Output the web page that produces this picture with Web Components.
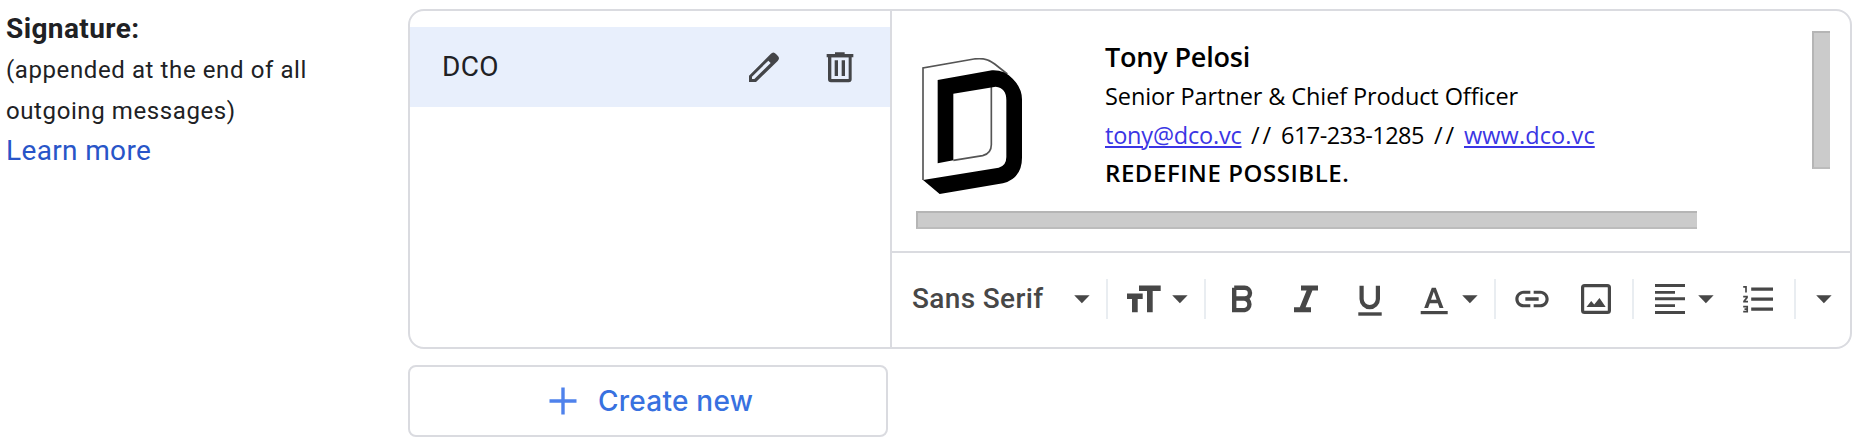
<!DOCTYPE html>
<html lang="en">
<head>
<meta charset="utf-8">
<title>Signature settings</title>
<style>
	body {
		margin: 0;
		background: #ffffff;
		color: #202124;
		font-family: Roboto, "Liberation Sans", sans-serif;
	}
</style>
</head>
<body>
<signature-settings></signature-settings>

<script>
const ICONS = {
	pencil: `<svg width="32" height="32" viewBox="1044 152 96 96">
		<path fill-rule="evenodd" d="M1047 245v-19l65-65q8-9 16 0l5 5q8 8 0 16l-65 63zM1056 236h7l49-48-7-7-49 48z"/></svg>`,
	trash: `<svg width="32" height="32" viewBox="1272 152 96 96">
		<path d="M1280 161h25v-5h29v5h26v10h-80z"/>
		<path fill-rule="evenodd" d="M1284 170h71v67q0 9-9 9h-53q-9 0-9-9zM1294 171v65h52v-65zM1304 180h10v47h-10zM1325 180h10v47h-10z"/></svg>`,
	size: `<svg width="40" height="40"><path d="M15 6.5h21.7V12h-8v21.3H23V12h-8zM3 14.5h15.7V20h-5v13.3H8V20H3z"/></svg>`,
	bold: `<svg width="40" height="40" fill="none" stroke="currentColor" stroke-width="4.4">
		<path d="M12.2 8.7H22.6a5.4 5.4 0 0 1 0 10.8H12.2M22.6 19.5a5.9 5.9 0 0 1 0 11.6H12.2V8.7"/></svg>`,
	italic: `<svg width="40" height="40"><path d="M15 6.5h17v5h-5.6L19.6 28.3H25v5H8v-5h5.8l6.8-16.8H15z"/></svg>`,
	underline: `<svg width="40" height="40"><path fill="none" stroke="currentColor" stroke-width="4.2" d="M11.6 6.7V20a8.15 8.15 0 0 0 16.3 0V6.7"/><path d="M8.3 33.3h23.4v3.4H8.3z"/></svg>`,
	color: `<svg width="40" height="40"><path fill-rule="evenodd" d="M17.8 8.7h4L29.5 29h-4l-1.7-4.7h-8L14.1 29h-3.9zM17 20.8h5.6l-2.8-8z"/><path d="M6.7 32h27v3.2h-27z"/></svg>`,
	link: `<svg width="40" height="40" viewBox="0 0 24 24"><path d="M3.9 12c0-1.71 1.39-3.1 3.1-3.1h4V7H7c-2.76 0-5 2.24-5 5s2.24 5 5 5h4v-1.9H7c-1.71 0-3.1-1.39-3.1-3.1zM8 13h8v-2H8v2zm9-6h-4v1.9h4c1.71 0 3.1 1.39 3.1 3.1s-1.39 3.1-3.1 3.1h-4V17h4c2.76 0 5-2.24 5-5s-2.24-5-5-5z"/></svg>`,
	image: `<svg width="40" height="40"><rect x="6.6" y="6.6" width="26.8" height="26.8" rx="2" fill="none" stroke="currentColor" stroke-width="3.2"/><path d="M10.5 28l4.7-6 3 3.5 5.3-6.5 6.2 9z"/></svg>`,
	align: `<svg width="40" height="40"><path d="M5 5h30v3H5zM5 12h20v2.7H5zM5 18.3h30v3H5zM5 25.3h20V28H5zM5 32h30v3H5z"/></svg>`,
	list: `<svg width="40" height="40">
		<path d="M13.2 8.4h21.8v3.3H13.2zM13.2 18.4h21.8v3.3H13.2zM13.2 28.4h21.8v3.3H13.2z"/>
		<g fill="none" stroke="currentColor" stroke-width="1.7"><path d="M5.2 7.8h2.8v5.7M5.2 17.7h3.8v.9L6 22.2v.4h4M5.2 27.6h4v5h-4M6.5 30.1H9"/></g></svg>`,
	arrow: `<svg width="16" height="40"><path d="M.2 16.3h15.4L7.9 24.3z"/></svg>`,
	plus: `<svg width="28" height="28"><path d="M12.3.5h3.4v11.8h11.8v3.4H15.7v11.8h-3.4V15.7H.5v-3.4h11.8z"/></svg>`
};

class UiIcon extends HTMLElement {
	connectedCallback() {
		this.attachShadow({ mode: "open" }).innerHTML = `
			<style>
				:host { display: block; flex: none; }
				svg { display: block; }
				svg:not([fill]) { fill: currentColor; }
			</style>
			${ICONS[this.getAttribute("name")]}
		`;
	}
}

class SettingLabel extends HTMLElement {
	connectedCallback() {
		this.attachShadow({ mode: "open" }).innerHTML = `
			<style>
				:host { display: block; padding: 8px 0 0 6px; line-height: 41px; white-space: nowrap; }
				.title { font-size: 28px; font-weight: 700; letter-spacing: 0.4px; }
				.note { font-size: 24px; letter-spacing: 0.6px; padding-top: 1px; }
				.more { display: block; font-size: 28px; line-height: 37px; letter-spacing: 0.35px; color: #2855c8; text-decoration: none; }
			</style>
			<div class="title">Signature:</div>
			<div class="note">(appended at the end of all<br>outgoing messages)</div>
			<a class="more" href="#">Learn more</a>
		`;
	}
}

class SignatureItem extends HTMLElement {
	connectedCallback() {
		this.attachShadow({ mode: "open" }).innerHTML = `
			<style>
				:host {
					display: flex;
					align-items: center;
					gap: 44px;
					box-sizing: border-box;
					height: 80px;
					margin-top: 16px;
					padding: 0 34px 0 32px;
					background: #e8effc;
				}
				.name { flex: 1; font-size: 28px; letter-spacing: 0.3px; margin-bottom: 2px; }
				ui-icon { color: #444548; }
			</style>
			<span class="name"><slot></slot></span>
			<ui-icon name="pencil"></ui-icon>
			<ui-icon name="trash"></ui-icon>
		`;
	}
}

class DcoLogo extends HTMLElement {
	connectedCallback() {
		this.attachShadow({ mode: "open" }).innerHTML = `
			<style>
				:host { display: block; }
				svg { display: block; }
			</style>
			<svg width="100" height="136" viewBox="66 54 300 408" fill="none">
				<path stroke="#555" stroke-width="5" d="M69 420V84L222 57Q258 51 284 72L322 102M160 361L248 347Q274 340 274 314V140"/>
				<path fill="#000" fill-rule="evenodd" d="M113 120L276 91Q312 89 338 116Q366 144 366 178V353Q366 414 309 430L119 462L69 420L296 383Q319 377 319 351V180Q319 144 287 140L160 161V361L113 370Z"/>
			</svg>
		`;
	}
}

class SignatureText extends HTMLElement {
	connectedCallback() {
		this.attachShadow({ mode: "open" }).innerHTML = `
			<style>
				:host { display: block; font: 23.5px "Open Sans", "Noto Sans", sans-serif; color: #000000; white-space: nowrap; }
				.name { font-size: 27px; font-weight: 600; line-height: 37px; letter-spacing: -0.19px; }
				.role { line-height: 42px; letter-spacing: -0.1px; }
				.contact { display: grid; grid-template-columns: 146px 30px 153px 30px auto; line-height: 36px; }
				.contact > * { justify-self: start; }
				.slashes { letter-spacing: 3px; }
				.phone { letter-spacing: -0.55px; }
				.mail { letter-spacing: -0.2px; }
				.site { letter-spacing: 0.1px; }
				.motto { font-size: 24px; font-weight: 600; line-height: 40px; letter-spacing: 0.55px; }
				a { color: #3b36e4; text-decoration: underline 2px; text-underline-offset: 2px; }
			</style>
			<div class="name">Tony Pelosi</div>
			<div class="role">Senior Partner &amp; Chief Product Officer</div>
			<div class="contact">
				<a class="mail" href="#">tony@dco.vc</a>
				<span class="slashes">//</span>
				<span class="phone">617-233-1285</span>
				<span class="slashes">//</span>
				<a class="site" href="#">www.dco.vc</a>
			</div>
			<div class="motto">REDEFINE POSSIBLE.</div>
		`;
	}
}

class SignatureEditor extends HTMLElement {
	connectedCallback() {
		this.attachShadow({ mode: "open" }).innerHTML = `
			<style>
				:host {
					display: grid;
					grid-template-columns: 189px 1fr 18px;
					grid-template-rows: 180px 18px;
					box-sizing: border-box;
					height: 240px;
					padding: 20px 20px 0 24px;
				}
				dco-logo { margin: 27px 0 0 6px; }
				signature-text { margin-top: 7px; }
				.bar { box-sizing: border-box; background: #cbcbcb; border: 2px solid #b5b5b5; border-right: 0; border-bottom-color: #bcbcbc; }
				.vertical { height: 138px; }
				.horizontal { grid-column: 1 / -1; width: 781px; }
			</style>
			<dco-logo></dco-logo>
			<signature-text></signature-text>
			<div class="bar vertical"></div>
			<div class="bar horizontal"></div>
		`;
	}
}

class FormatToolbar extends HTMLElement {
	connectedCallback() {
		this.attachShadow({ mode: "open" }).innerHTML = `
			<style>
				:host {
					display: flex;
					align-items: center;
					box-sizing: border-box;
					height: 94px;
					padding-left: 20px;
					border-top: 2px solid #dadbe0;
					color: #474747;
				}
				.font { width: 162px; font-size: 28px; font-weight: 500; letter-spacing: 0.35px; white-space: nowrap; margin-bottom: 2px; }
				.group { display: flex; gap: 24px; }
				.menu { display: flex; gap: 8px; }
				.rule { width: 2px; height: 40px; margin: 0 16px; background: #e9edf1; }
				.last { margin-left: 4px; }
			</style>
			<span class="font">Sans Serif</span>
			<ui-icon name="arrow"></ui-icon>
			<div class="rule"></div>
			<div class="menu"><ui-icon name="size"></ui-icon><ui-icon name="arrow"></ui-icon></div>
			<div class="rule"></div>
			<div class="group">
				<ui-icon name="bold"></ui-icon>
				<ui-icon name="italic"></ui-icon>
				<ui-icon name="underline"></ui-icon>
				<div class="menu"><ui-icon name="color"></ui-icon><ui-icon name="arrow"></ui-icon></div>
			</div>
			<div class="rule"></div>
			<div class="group">
				<ui-icon name="link"></ui-icon>
				<ui-icon name="image"></ui-icon>
			</div>
			<div class="rule"></div>
			<div class="group">
				<div class="menu"><ui-icon name="align"></ui-icon><ui-icon name="arrow"></ui-icon></div>
				<ui-icon name="list"></ui-icon>
			</div>
			<div class="rule"></div>
			<ui-icon class="last" name="arrow"></ui-icon>
		`;
	}
}

class CreateButton extends HTMLElement {
	connectedCallback() {
		this.attachShadow({ mode: "open" }).innerHTML = `
			<style>
				:host { display: block; width: 480px; }
				button {
					display: flex;
					align-items: center;
					width: 100%;
					height: 72px;
					padding: 0 0 0 139px;
					border: 2px solid #dadbe0;
					border-radius: 8px;
					background: #ffffff;
					color: #3871e0;
					font: 500 28px Inter, sans-serif;
					letter-spacing: 0.25px;
				}
				ui-icon { color: #4f82ec; margin-right: 21px; }
			</style>
			<button type="button"><ui-icon name="plus"></ui-icon><span><slot></slot></span></button>
		`;
	}
}

class SignatureSettings extends HTMLElement {
	connectedCallback() {
		this.attachShadow({ mode: "open" }).innerHTML = `
			<style>
				:host { display: grid; grid-template-columns: 408px 1444px; }
				main { padding-top: 9px; }
				.panel {
					display: grid;
					grid-template-columns: 480px 1fr;
					box-sizing: border-box;
					height: 340px;
					border: 2px solid #dadbe0;
					border-radius: 16px;
					overflow: hidden;
				}
				.editor { border-left: 2px solid #dadbe0; }
				create-button { margin-top: 16px; }
			</style>
			<setting-label></setting-label>
			<main>
				<div class="panel">
					<div><signature-item>DCO</signature-item></div>
					<div class="editor">
						<signature-editor></signature-editor>
						<format-toolbar></format-toolbar>
					</div>
				</div>
				<create-button>Create new</create-button>
			</main>
		`;
	}
}

customElements.define("ui-icon", UiIcon);
customElements.define("setting-label", SettingLabel);
customElements.define("signature-item", SignatureItem);
customElements.define("dco-logo", DcoLogo);
customElements.define("signature-text", SignatureText);
customElements.define("signature-editor", SignatureEditor);
customElements.define("format-toolbar", FormatToolbar);
customElements.define("create-button", CreateButton);
customElements.define("signature-settings", SignatureSettings);
</script>
</body>
</html>
